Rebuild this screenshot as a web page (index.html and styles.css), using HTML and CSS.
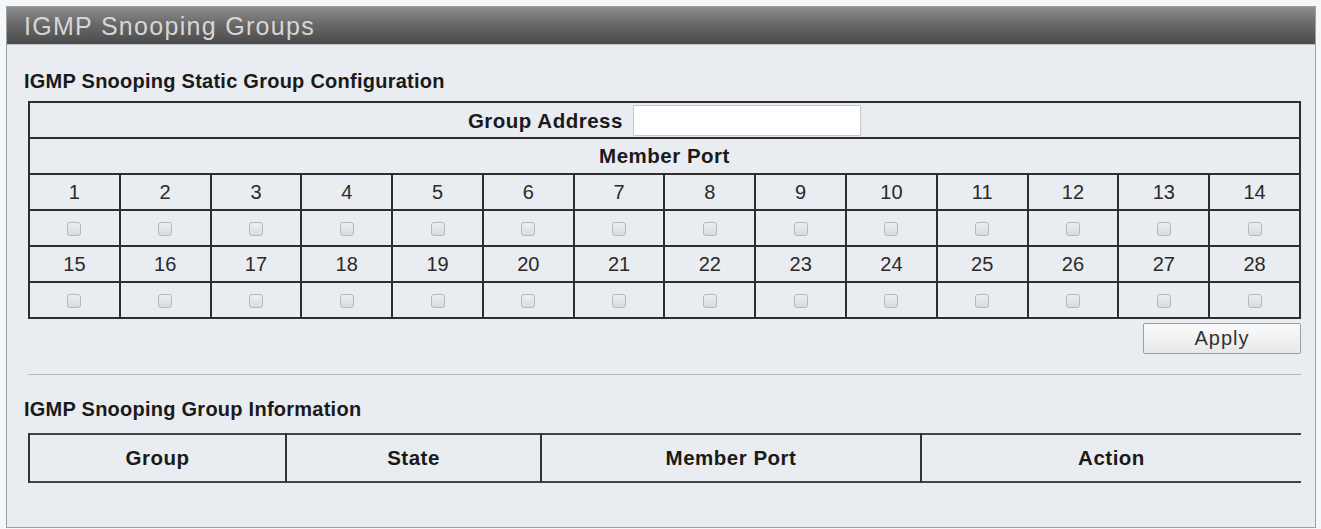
FILE: index.html
```html
<!DOCTYPE html>
<html lang="en">

<head>
    <meta charset="UTF-8">
    <meta name="viewport" content="width=device-width, initial-scale=1.0">
    <title>IGMP Snooping Groups</title>
    <link rel="stylesheet" href="styles.css">
</head>

<body>
    <div class="panel">
        <div class="panel-title">IGMP Snooping Groups</div>

        <div class="panel-body">
            <h3 class="section-title">IGMP Snooping Static Group Configuration</h3>
            <table class="port-table">
                <tr>
                    <td colspan="14" class="addr-cell">
                        <label for="group-addr">Group Address</label>
                        <input type="text" id="group-addr" class="addr-input">
                    </td>
                </tr>
                <tr>
                    <td colspan="14" class="head-cell">Member Port</td>
                </tr>
                <tr>
                    <td>1</td><td>2</td><td>3</td><td>4</td><td>5</td><td>6</td><td>7</td>
                    <td>8</td><td>9</td><td>10</td><td>11</td><td>12</td><td>13</td><td>14</td>
                </tr>
                <tr>
                    <td><input type="checkbox" class="chk"></td><td><input type="checkbox" class="chk"></td>
                    <td><input type="checkbox" class="chk"></td><td><input type="checkbox" class="chk"></td>
                    <td><input type="checkbox" class="chk"></td><td><input type="checkbox" class="chk"></td>
                    <td><input type="checkbox" class="chk"></td><td><input type="checkbox" class="chk"></td>
                    <td><input type="checkbox" class="chk"></td><td><input type="checkbox" class="chk"></td>
                    <td><input type="checkbox" class="chk"></td><td><input type="checkbox" class="chk"></td>
                    <td><input type="checkbox" class="chk"></td><td><input type="checkbox" class="chk"></td>
                </tr>
                <tr>
                    <td>15</td><td>16</td><td>17</td><td>18</td><td>19</td><td>20</td><td>21</td>
                    <td>22</td><td>23</td><td>24</td><td>25</td><td>26</td><td>27</td><td>28</td>
                </tr>
                <tr>
                    <td><input type="checkbox" class="chk"></td><td><input type="checkbox" class="chk"></td>
                    <td><input type="checkbox" class="chk"></td><td><input type="checkbox" class="chk"></td>
                    <td><input type="checkbox" class="chk"></td><td><input type="checkbox" class="chk"></td>
                    <td><input type="checkbox" class="chk"></td><td><input type="checkbox" class="chk"></td>
                    <td><input type="checkbox" class="chk"></td><td><input type="checkbox" class="chk"></td>
                    <td><input type="checkbox" class="chk"></td><td><input type="checkbox" class="chk"></td>
                    <td><input type="checkbox" class="chk"></td><td><input type="checkbox" class="chk"></td>
                </tr>
            </table>

            <div class="btn-row">
                <button class="btn">Apply</button>
            </div>

            <hr class="divider">

            <h3 class="section-title info-title">IGMP Snooping Group Information</h3>
            <table class="info-table">
                <tr>
                    <th class="col-group">Group</th>
                    <th class="col-state">State</th>
                    <th class="col-port">Member Port</th>
                    <th class="col-action">Action</th>
                </tr>
            </table>
        </div>
    </div>
</body>

</html>
```

FILE: styles.css
```css
* {
    padding: 0;
    margin: 0;
    box-sizing: border-box;
}

body {
    background: #f4f6f8;
    font-family: "Liberation Sans", Arial, sans-serif;
    color: #1e1e1e;
}

.panel {
    margin: 6px 0 0 6px;
    width: 1310px;
    height: 522px;
    border: 1px solid #98a0a8;
    background: #e9ecf0;
}

.panel-title {
    height: 38px;
    padding-left: 17px;
    font-size: 25px;
    letter-spacing: 1.3px;
    line-height: 38px;
    color: #d6d6d6;
    background: linear-gradient(#8e8e8e, #6a6a6a 45%, #4a4a4a);
    border-bottom: 1px solid #bcc2c8;
}

.panel-body {
    padding: 0 14px 0 21px;
}

.section-title {
    margin-top: 25px;
    margin-left: -4px;
    font-size: 20px;
    letter-spacing: 0.25px;
    line-height: 22px;
    font-weight: bold;
    color: #1a1a1a;
}

.port-table {
    margin-top: 9px;
    width: 1273px;
    border-collapse: collapse;
    table-layout: fixed;
    border: 2px solid #2e2e2e;
}

.port-table td {
    height: 36px;
    border: 2px solid #2e2e2e;
    text-align: center;
    font-size: 20px;
    color: #2a2a2a;
}

.port-table .head-cell,
.port-table .addr-cell {
    font-size: 20.5px;
    letter-spacing: 0.5px;
    font-weight: bold;
    color: #1a1a1a;
}

.addr-cell label {
    vertical-align: middle;
}

.addr-input {
    width: 228px;
    height: 31px;
    margin-left: 4px;
    vertical-align: middle;
    border: 1px solid #c4c8cc;
    background: #fff;
}

.chk {
    appearance: none;
    -webkit-appearance: none;
    width: 14px;
    height: 14px;
    border: 1px solid #b5b9be;
    border-radius: 3px;
    background: linear-gradient(#eceef0, #d8dbdf);
    vertical-align: middle;
}

.btn-row {
    display: flex;
    justify-content: flex-end;
    width: 1273px;
    margin-top: 4px;
}

.btn {
    width: 158px;
    height: 31px;
    font-family: "Liberation Sans", Arial, sans-serif;
    font-size: 20px;
    letter-spacing: 1px;
    color: #333;
    border: 1px solid #9a9ea3;
    border-radius: 2px;
    background: linear-gradient(#fbfbfb, #e6e8ea);
}

.divider {
    margin-top: 20px;
    width: 1273px;
    border: none;
    border-top: 1px solid #b4b8bc;
}

.info-title {
    margin-top: 23px;
}

.info-table {
    margin-top: 13px;
    width: 1273px;
    border-collapse: collapse;
    table-layout: fixed;
    border-top: 2px solid #444;
    border-bottom: 2px solid #444;
}

.info-table th {
    height: 48px;
    font-size: 20.5px;
    letter-spacing: 0.5px;
    font-weight: bold;
    color: #1a1a1a;
    border-left: 2px solid #333;
}

.col-group {
    width: 257px;
}

.col-state {
    width: 255px;
}

.col-port,
.col-action {
    width: 380px;
}
```
